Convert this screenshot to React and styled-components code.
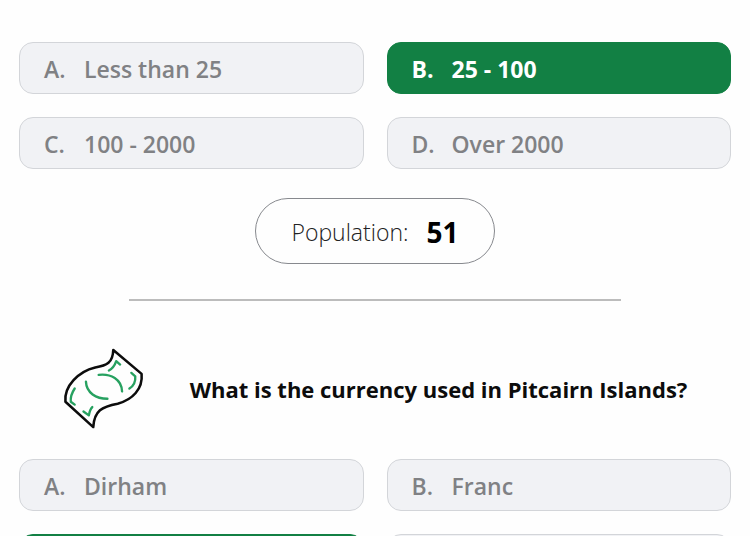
import React from 'react'
import styled, { createGlobalStyle } from 'styled-components'


const populationAnswers = [
    { letter: "A.", text: "Less than 25" },
    { letter: "B.", text: "25 - 100", correct: true },
    { letter: "C.", text: "100 - 2000" },
    { letter: "D.", text: "Over 2000" },
];

const currencyAnswers = [
    { letter: "A.", text: "Dirham" },
    { letter: "B.", text: "Franc" },
    { correct: true },
    {},
];

const BanknoteIcon = () => (
    <StyledIcon viewBox="0 0 84 86" aria-hidden="true">
        <g fill="none" strokeLinecap="round" strokeLinejoin="round">
            <path stroke="#0c0c0c" strokeWidth="2.600" d="M51.5 3 L80.500 27.5 C82 43 71 54 56 58 C40 61 32 65 31 82 L2.500 56 C1 40 16 25 33 21 C45 19 51 16 51.500 3 Z" />
            <path stroke="#27a160" strokeWidth="2.400" d="M36.500 28.500 C49 27 60 33 60.500 45.500 M23.500 35.500 C24 47 34 53 45.500 53 M47 24 C51 22 53 19 54.500 14.500 L58.500 18 M70 26.500 L74 30 C74.500 36 72 40 68 42.500 M12 42.500 C9 47 7.500 51 8 56 L12 59 M30 61.500 C27.500 64 27 67 26.500 70 L21 66" />
        </g>
    </StyledIcon>
)

const AnswerGrid = ({ answers }) => (
    <StyledAnswers>
        {answers.map((answer, index) => (
            <StyledAnswer type="button" key={index} $correct={answer.correct}>
                <StyledLetter>{answer.letter}</StyledLetter>
                <span>{answer.text}</span>
            </StyledAnswer>
        ))}
    </StyledAnswers>
)

const App = () => {
    return (
        <>
            <GlobalStyle />
            <StyledPage>
                <AnswerGrid answers={populationAnswers} />
                <StyledFact>
                    Population: <StyledFactValue>51</StyledFactValue>
                </StyledFact>
                <StyledDivider />
                <StyledQuestion>
                    <BanknoteIcon />
                    <StyledTitle>What is the currency used in Pitcairn Islands?</StyledTitle>
                </StyledQuestion>
                <AnswerGrid answers={currencyAnswers} />
            </StyledPage>
        </>
    )
}


const GlobalStyle = createGlobalStyle`
    * {
        box-sizing: border-box;
    }

    body {
        margin: 0;
        background-color: #fefefe;
        font-family: "Segoe UI", "Open Sans", "Noto Sans", sans-serif;
    }
`

const StyledPage = styled.main`
    display: flex;
    flex-direction: column;
    height: 100vh;
    padding: 42px 19px 0;
    overflow: hidden;

    > * {
        flex-shrink: 0;
    }
`

const StyledAnswers = styled.div`
    display: grid;
    grid-template-columns: 1fr 1fr;
    gap: 23px;
`

const StyledAnswer = styled.button`
    display: flex;
    align-items: center;
    min-height: 52px;
    padding: 1px 24px 0;
    border: 1px solid ${(props) => (props.$correct ? "#128044" : "#d3d5d9")};
    border-radius: 14px;
    color: ${(props) => (props.$correct ? "#fff" : "#808184")};
    background-color: ${(props) => (props.$correct ? "#128044" : "#f1f2f5")};
    font-family: inherit;
    font-size: 23px;
    font-weight: ${(props) => (props.$correct ? 700 : 600)};
    line-height: 30px;
    cursor: pointer;
`

const StyledLetter = styled.span`
    min-width: 40px;
    text-align: left;
`

const StyledFact = styled.p`
    display: flex;
    align-items: center;
    align-self: center;
    gap: 18px;
    margin: 29px 0 35px;
    padding: 1px 35px 0;
    height: 66px;
    border: 1px solid #87898e;
    border-radius: 33px;
    color: #222;
    font-size: 23px;
    font-weight: 300;
`

const StyledFactValue = styled.strong`
    color: #000;
    font-size: 28px;
    font-weight: 700;
`

const StyledDivider = styled.hr`
    width: 69%;
    height: 2px;
    margin: 0 auto;
    border: 0;
    background-color: #bcbcbc;
`

const StyledQuestion = styled.div`
    display: flex;
    align-items: center;
    padding: 46px 0 28px 43px;
`

const StyledIcon = styled.svg`
    flex: none;
    width: 84px;
    height: 84px;
`

const StyledTitle = styled.h2`
    flex: 1;
    margin: 0;
    color: #0c0c0c;
    font-size: 22px;
    font-weight: 700;
    line-height: 30px;
    text-align: center;
`


export default App
